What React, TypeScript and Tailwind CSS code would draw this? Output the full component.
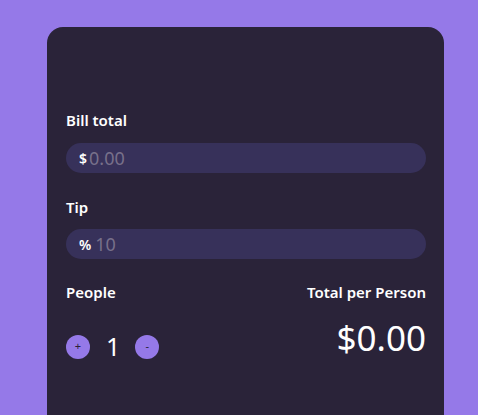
import React from "react";

export default function App() {
  return (
    <div className="h-[415px] w-full bg-[#9579e8] pt-[27px] pl-[47px] overflow-hidden" style={{ fontFamily: '"Noto Sans", sans-serif' }}>
      <div className="w-[397px] h-[420px] rounded-[16px] bg-[#2a2339] pl-[19px] pr-[18px] pt-[83px] text-white">
        <label className="block text-[15px] font-semibold leading-[20px]">Bill total</label>
        <div className="mt-[13px] flex h-[30px] items-center rounded-full bg-[#37315a] px-[13px]">
          <span className="text-[14px] font-semibold">$</span>
          <input className="ml-[2px] w-full bg-transparent text-[18px] text-white outline-none placeholder:text-[#77708a]" placeholder="0.00" />
        </div>
        <label className="mt-[24px] block text-[15px] font-semibold leading-[20px]">Tip</label>
        <div className="mt-[12px] flex h-[30px] items-center rounded-full bg-[#37315a] px-[13px]">
          <span className="text-[14px] font-semibold">%</span>
          <input className="ml-[4px] w-full bg-transparent text-[18px] text-white outline-none placeholder:text-[#77708a]" placeholder="10" />
        </div>
        <div className="mt-[23px] flex justify-between">
          <div>
            <div className="text-[15px] font-semibold leading-[20px]">People</div>
            <div className="mt-[32px] flex items-center">
              <button className="flex h-[24px] w-[24px] items-center justify-center rounded-full bg-[#9579e8] text-[11px] text-[#2a2339]">+</button>
              <span className="ml-[16px] mr-[15px] text-[25px] leading-none">1</span>
              <button className="flex h-[24px] w-[24px] items-center justify-center rounded-full bg-[#9579e8] text-[11px] text-[#2a2339]">-</button>
            </div>
          </div>
          <div className="text-right">
            <div className="text-[15px] font-semibold leading-[20px]">Total per Person</div>
            <div className="mt-[18px] text-[35px] leading-none">$0.00</div>
          </div>
        </div>
      </div>
    </div>
  );
}
